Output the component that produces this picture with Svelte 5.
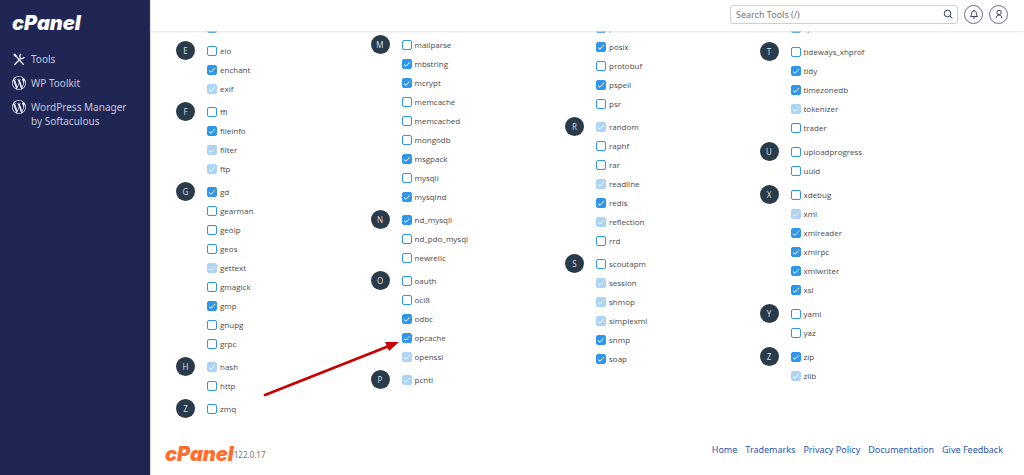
<script lang="ts">
  // state: "on", "off" or "locked" (ticked, but cannot be changed)
  type State = "on" | "off" | "locked";
  type Group = { letter: string; items: [string, State][] };

  // "+" ticked, "#" locked, nothing for unticked
  function group(letter: string, list: string): Group {
    return {
      letter,
      items: list.split(" ").map((word) => {
        if (word[0] == "+") return [word.slice(1), "on"];
        if (word[0] == "#") return [word.slice(1), "locked"];
        return [word, "off"];
      }),
    };
  }

  const columns: Group[][] = [
    [
      group("", "+dom"),
      group("E", "eio +enchant #exif"),
      group("F", "ffi +fileinfo #filter #ftp"),
      group("G", "+gd gearman geoip geos #gettext gmagick +gmp gnupg grpc"),
      group("H", "#hash http"),
      group("Z", "zmq"),
    ],
    [
      group(
        "M",
        "mailparse +mbstring +mcrypt memcache memcached mongodb +msgpack mysqli +mysqlnd"
      ),
      group("N", "+nd_mysqli nd_pdo_mysql newrelic"),
      group("O", "oauth oci8 +odbc +opcache #openssl"),
      group("P", "#pcntl"),
    ],
    [
      group("", "+phar +posix protobuf +pspell psr"),
      group("R", "#random raphf rar #readline +redis #reflection rrd"),
      group("S", "scoutapm #session #shmop #simplexml +snmp +soap"),
    ],
    [
      group("", "+sysvshm"),
      group("T", "tideways_xhprof +tidy +timezonedb #tokenizer trader"),
      group("U", "uploadprogress uuid"),
      group("X", "xdebug #xml +xmlreader +xmlrpc +xmlwriter +xsl"),
      group("Y", "yaml yaz"),
      group("Z", "+zip #zlib"),
    ],
  ];

  const links = [
    "Home",
    "Trademarks",
    "Privacy Policy",
    "Documentation",
    "Give Feedback",
  ];
</script>

{#snippet wordpress()}
  <svg viewBox="0 0 24 24" width="14" height="14" fill="currentColor" aria-hidden="true">
    <path
      d="M21.469 6.825c.84 1.537 1.318 3.3 1.318 5.175 0 3.979-2.156 7.456-5.363 9.325l3.295-9.527c.615-1.54.82-2.771.82-3.864 0-.405-.026-.78-.07-1.11m-7.981.105c.647-.03 1.232-.105 1.232-.105.582-.075.514-.93-.067-.899 0 0-1.755.135-2.88.135-1.064 0-2.85-.15-2.85-.15-.585-.03-.661.855-.075.885 0 0 .54.061 1.125.09l1.68 4.605-2.37 7.08L5.354 6.9c.649-.03 1.234-.1 1.234-.1.585-.075.516-.93-.065-.896 0 0-1.746.138-2.874.138-.2 0-.438-.008-.69-.015C4.911 3.15 8.235 1.215 12 1.215c2.809 0 5.365 1.072 7.286 2.833-.046-.003-.091-.009-.141-.009-1.06 0-1.812.923-1.812 1.914 0 .89.513 1.643 1.06 2.531.411.72.89 1.643.89 2.977 0 .915-.354 1.994-.821 3.479l-1.075 3.585-3.9-11.61.001.014zM12 22.784c-1.059 0-2.081-.153-3.048-.437l3.237-9.406 3.315 9.087c.024.053.05.101.078.149-1.12.393-2.325.609-3.582.609M1.211 12c0-1.564.336-3.05.935-4.39L7.29 21.709C3.694 19.96 1.212 16.271 1.211 12M12 0C5.385 0 0 5.385 0 12s5.385 12 12 12 12-5.385 12-12S18.615 0 12 0"
    />
  </svg>
{/snippet}

<div class="app">
  <aside>
    <a class="logo" href="#home">cPanel</a>
    <nav>
      <a href="#tools">
        <svg viewBox="0 0 14 14" width="14" height="14" fill="none" stroke="currentColor" aria-hidden="true">
          <path d="M3 3 11.600 12.800" stroke-width="1.300" />
          <path d="M2 2 4.200 4.500" stroke-width="2" />
          <path d="M8.600 6.400 2.500 12.800" stroke-width="1.500" />
          <path d="M9.300 2.100A2.300 2.300 0 1 0 12.200 5" stroke-width="1.300" />
        </svg>
        Tools
      </a>
      <a href="#wp-toolkit">{@render wordpress()} WP Toolkit</a>
      <a href="#wp-manager">{@render wordpress()} WordPress Manager<br />by Softaculous</a>
    </nav>
  </aside>

  <div class="page">
    <header>
      <form class="search">
        <input type="search" aria-label="Search Tools" placeholder="Search Tools (/)" />
        <button type="button" aria-label="Search">
          <svg viewBox="0 0 10 10" width="10" height="10" fill="none" stroke="currentColor">
            <circle cx="4.500" cy="4.500" r="3.300" />
            <path d="M7 7 9.300 9.300" />
          </svg>
        </button>
      </form>
      <button class="round" type="button" aria-label="Notifications">
        <svg viewBox="0 0 10 10" width="10" height="10" fill="none" stroke="currentColor">
          <path d="M1.500 7.500C2.500 6.500 2.400 5.500 2.600 4.200 2.800 2.600 3.700 1.900 5 1.900S7.200 2.600 7.400 4.200C7.600 5.500 7.500 6.500 8.500 7.500Z" />
          <path d="M5 .8V2M4 9H6" />
        </svg>
      </button>
      <button class="round" type="button" aria-label="Account">
        <svg viewBox="0 0 10 10" width="10" height="10" fill="none" stroke="currentColor">
          <circle cx="5" cy="3.500" r="2.200" />
          <path d="M2.200 9.200C2.200 7.300 3.200 6 5 6S7.800 7.300 7.800 9.200" />
        </svg>
      </button>
    </header>

    <main>
      {#each columns as column}
        <div class="column">
          {#each column as { letter, items }}
            <section>
              <span class="badge" class:empty={!letter}>{letter}</span>
              <ul>
                {#each items as [name, state]}
                  <li>
                    <label>
                      <input
                        type="checkbox"
                        checked={state != "off"}
                        disabled={state == "locked"}
                      />
                      {name}
                    </label>
                  </li>
                {/each}
              </ul>
            </section>
          {/each}
        </div>
      {/each}

      <svg class="arrow" viewBox="0 0 138 58" width="138" height="58" aria-hidden="true">
        <path d="M2 55 126 6" stroke="#c80000" stroke-width="2.600" stroke-linecap="round" />
        <path d="M136 2 122 2 126 11Z" fill="#c80000" />
      </svg>
    </main>

    <footer>
      <a class="logo orange" href="#home">cPanel</a>
      <span class="version">122.0.17</span>
      <nav>
        {#each links as link}
          <a href="#{link}">{link}</a>
        {/each}
      </nav>
    </footer>
  </div>
</div>

<style>
  :global(body) {
    margin: 0;
    background: #fff;
  }
  .app {
    display: flex;
    height: 100vh;
    overflow: hidden;
    font-family: "Noto Sans", "Open Sans", sans-serif;
    font-size: 9px;
    color: #4a4a4a;
  }
  a {
    text-decoration: none;
  }
  button {
    padding: 0;
    background: none;
    cursor: pointer;
  }

  aside {
    flex: 0 0 150px;
    box-sizing: border-box;
    padding: 13px 12px 0;
    background: #1f2654;
  }
  .logo {
    font-family: Inter, sans-serif;
    font-size: 20px;
    line-height: 20px;
    font-weight: 900;
    font-style: italic;
    color: #fff;
  }
  .orange {
    color: #ff6c2c;
  }
  aside nav {
    display: flex;
    flex-direction: column;
    gap: 10px;
    margin-top: 19px;
  }
  aside nav a {
    display: flex;
    gap: 5px;
    font-size: 10px;
    line-height: 14px;
    color: #c3c7dc;
  }
  aside svg {
    flex: none;
    color: #e6e8f2;
  }

  .page {
    flex: 1;
    min-width: 0;
    border-left: 1px solid #d9d8e8;
  }
  header {
    position: relative;
    z-index: 1;
    display: flex;
    align-items: center;
    justify-content: flex-end;
    gap: 6px;
    height: 31px;
    box-sizing: border-box;
    padding: 0 16px 3px 0;
    background: #fff;
    box-shadow: 0 1px 2px #e4e4e8;
  }
  .search {
    display: flex;
    align-items: center;
    width: 228px;
    height: 19px;
    box-sizing: border-box;
    margin: 0;
    border: 1px solid #cfcfdb;
    border-radius: 3px;
  }
  .search input {
    flex: 1;
    min-width: 0;
    border: 0;
    padding: 0 5px;
    background: none;
    font: inherit;
    outline: none;
  }
  .search input::placeholder {
    color: #757575;
  }
  .search button {
    display: flex;
    border: 0;
    margin-right: 4px;
    color: #2c4257;
  }
  .round {
    display: flex;
    align-items: center;
    justify-content: center;
    width: 19px;
    height: 19px;
    border: 1px solid #6a6a98;
    border-radius: 50%;
    color: #3d3d74;
  }

  /* the list is scrolled a little way under the header */
  main {
    position: relative;
    display: grid;
    grid-template-columns: repeat(4, 1fr);
    margin-top: -13px;
    padding: 0 70px 0 25px;
  }
  .column:nth-child(2) {
    padding-top: 17px;
  }
  section {
    display: flex;
    gap: 12px;
    margin-bottom: 4px;
  }
  .column:nth-child(4) section {
    margin-bottom: 5px;
  }
  .badge {
    flex: none;
    width: 19px;
    height: 19px;
    border-radius: 50%;
    background: #293a4a;
    color: #d5dae0;
    font-size: 8px;
    line-height: 19px;
    text-align: center;
  }
  .empty {
    background: none;
  }
  ul {
    margin: 0;
    padding: 0;
    list-style: none;
  }
  label {
    display: flex;
    align-items: center;
    gap: 3px;
    height: 19px;
    font-family: "Open Sans", "Noto Sans", sans-serif;
    font-size: 8px;
  }
  label input {
    appearance: none;
    width: 10px;
    height: 10px;
    box-sizing: border-box;
    margin: 1px 0 0;
    border: 1px solid #2f96ee;
    border-radius: 2px;
  }
  label input:checked {
    background: #2f96ee
      url("data:image/svg+xml,%3Csvg xmlns='http://www.w3.org/2000/svg' viewBox='0 0 8 8'%3E%3Cpath d='M1 4.500 3 6.300 7 1.900' fill='none' stroke='white'/%3E%3C/svg%3E");
  }
  label input:disabled {
    opacity: 0.4;
  }
  .arrow {
    position: absolute;
    left: 112px;
    top: 322px;
  }

  footer {
    display: flex;
    align-items: center;
    margin-top: 21px;
    padding: 0 21px 0 14px;
  }
  .version {
    margin-top: 1px;
    font-size: 8px;
    color: #6c757d;
  }
  footer nav {
    display: flex;
    gap: 8px;
    margin: 0 0 8px auto;
  }
  footer nav a {
    color: #2a56ae;
  }
</style>
